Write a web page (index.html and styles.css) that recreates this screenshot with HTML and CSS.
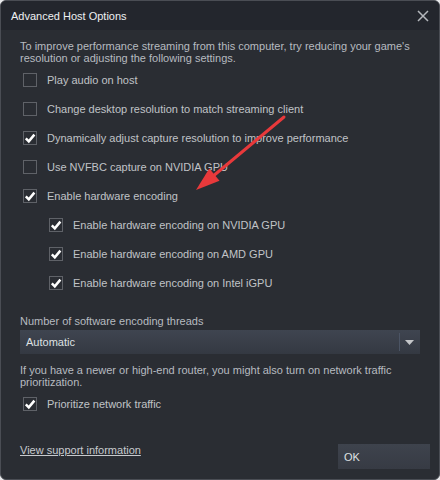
FILE: index.html
```html
<!DOCTYPE html>
<html>
<head>
<meta charset="utf-8">
<link rel="stylesheet" href="styles.css">
</head>
<body>
<div class="dialog">
  <div class="titlebar">
    <span class="title">Advanced Host Options</span>
    <svg class="close" width="12" height="12" viewBox="0 0 12 12"><path d="M1 1 L11 11 M11 1 L1 11" stroke="#b4b7bc" stroke-width="1.5" fill="none"/></svg>
  </div>
  <div class="content">
    <p class="text">To improve performance streaming from this computer, try reducing your game's resolution or adjusting the following settings.</p>
    <div class="opts">
      <div class="row"><span class="cb"></span><span>Play audio on host</span></div>
      <div class="row"><span class="cb"></span><span>Change desktop resolution to match streaming client</span></div>
      <div class="row"><span class="cb on"><svg width="12" height="12" viewBox="0 0 12 12"><path d="M1.8 6.3 L4.8 9.3 L10.4 2.6" stroke="#fff" stroke-width="2.5" fill="none"/></svg></span><span>Dynamically adjust capture resolution to improve performance</span></div>
      <div class="row"><span class="cb"></span><span>Use NVFBC capture on NVIDIA GPU</span></div>
      <div class="row"><span class="cb on"><svg width="12" height="12" viewBox="0 0 12 12"><path d="M1.8 6.3 L4.8 9.3 L10.4 2.6" stroke="#fff" stroke-width="2.5" fill="none"/></svg></span><span>Enable hardware encoding</span></div>
      <div class="row sub"><span class="cb on"><svg width="12" height="12" viewBox="0 0 12 12"><path d="M1.8 6.3 L4.8 9.3 L10.4 2.6" stroke="#fff" stroke-width="2.5" fill="none"/></svg></span><span>Enable hardware encoding on NVIDIA GPU</span></div>
      <div class="row sub"><span class="cb on"><svg width="12" height="12" viewBox="0 0 12 12"><path d="M1.8 6.3 L4.8 9.3 L10.4 2.6" stroke="#fff" stroke-width="2.5" fill="none"/></svg></span><span>Enable hardware encoding on AMD GPU</span></div>
      <div class="row sub"><span class="cb on"><svg width="12" height="12" viewBox="0 0 12 12"><path d="M1.8 6.3 L4.8 9.3 L10.4 2.6" stroke="#fff" stroke-width="2.5" fill="none"/></svg></span><span>Enable hardware encoding on Intel iGPU</span></div>
    </div>
    <p class="text label">Number of software encoding threads</p>
    <div class="select">
      <span class="sel-text">Automatic</span>
      <span class="sep"></span>
      <svg class="caret" width="9" height="5" viewBox="0 0 9 5"><path d="M0 0 H9 L4.5 5 Z" fill="#c4c6c9"/></svg>
    </div>
    <p class="text router">If you have a newer or high-end router, you might also turn on network traffic prioritization.</p>
    <div class="row prio"><span class="cb on"><svg width="12" height="12" viewBox="0 0 12 12"><path d="M1.8 6.3 L4.8 9.3 L10.4 2.6" stroke="#fff" stroke-width="2.5" fill="none"/></svg></span><span>Prioritize network traffic</span></div>
  </div>
  <div class="footer">
    <a class="link">View support information</a>
    <button class="ok">OK</button>
  </div>
  <svg class="arrow" width="440" height="480" viewBox="0 0 440 480">
    <line x1="284" y1="117" x2="212" y2="177" stroke="#e8393b" stroke-width="3" stroke-linecap="round"/>
    <polygon points="196,190 219.5,180.7 209.3,168.5" fill="#e8393b"/>
  </svg>
</div>
</body>
</html>
```
FILE: styles.css
```css
html, body {
  margin: 0;
  padding: 0;
  background: #e9eaec;
}
body {
  font-family: "Liberation Sans", Arial, sans-serif;
  font-size: 11px;
}
.dialog {
  position: relative;
  width: 440px;
  height: 480px;
  box-sizing: border-box;
  border: 1px solid #4a4d54;
  border-radius: 6px;
  background: #2a2d33;
  display: flex;
  flex-direction: column;
  overflow: hidden;
}
.titlebar {
  height: 29px;
  flex: none;
  display: flex;
  align-items: center;
  justify-content: space-between;
  padding: 0 10px 0 10px;
  background: #23262d;
}
.title {
  color: #eef0f2;
  font-size: 11px;
}
.content {
  padding: 10px 19px 0 19px;
  flex: 1;
}
.text {
  margin: 0;
  color: #b7bbc0;
  line-height: 12px;
}
.opts {
  margin-top: 1px;
  display: flex;
  flex-direction: column;
}
.row {
  height: 29px;
  display: flex;
  align-items: center;
  color: #c0c3c7;
  padding-left: 3px;
}
.row.sub {
  padding-left: 29px;
}
.cb {
  width: 14px;
  height: 14px;
  box-sizing: border-box;
  border: 1px solid #5f6268;
  margin-right: 10px;
  flex: none;
  display: flex;
  align-items: center;
  justify-content: center;
}
.label {
  margin-top: 18px;
}
.select {
  margin-top: 3px;
  height: 24px;
  background: linear-gradient(#3f4550, #343942);
  display: flex;
  align-items: center;
  padding-left: 6px;
  color: #dfe1e3;
}
.sel-text {
  flex: 1;
}
.sep {
  width: 1px;
  height: 18px;
  background: #4b5464;
  margin-right: 5px;
}
.caret {
  margin-right: 6px;
  margin-top: 1px;
}
.router {
  margin-top: 10px;
}
.prio {
  height: 28px;
  margin-top: 2px;
}
.footer {
  flex: none;
  display: flex;
  justify-content: space-between;
  align-items: flex-start;
  padding: 0 9px 10px 19px;
}
.link {
  color: #c7cace;
  text-decoration: underline;
  line-height: 12px;
}
.ok {
  width: 92px;
  height: 25px;
  border: none;
  background: linear-gradient(#3e434d, #373b44);
  color: #dfe1e3;
  font-family: "Liberation Sans", Arial, sans-serif;
  font-size: 11px;
  text-align: left;
  padding: 0 0 0 6px;
  margin: 0;
}
.arrow {
  position: absolute;
  left: -1px;
  top: -1px;
  pointer-events: none;
}
```
